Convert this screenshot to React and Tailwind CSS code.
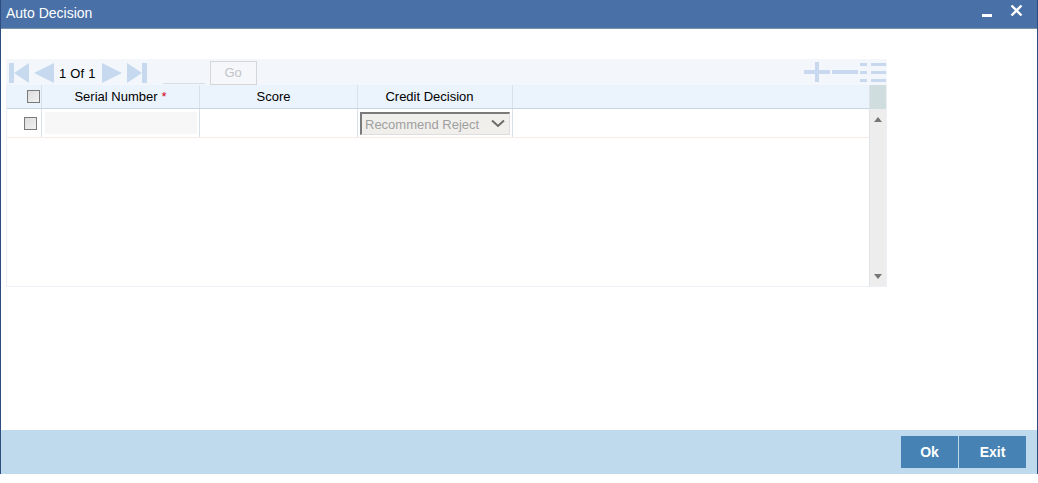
import React from "react";

const F = { fontFamily: '"Liberation Sans", Arial, sans-serif' };

function Tri({ dir, bar }) {
  return (
    <svg width="20" height="20" viewBox="0 0 20 20">
      {dir === "left" ? (
        <>
          {bar && <rect x="0" y="0" width="5" height="20" fill="#c6d9ef" />}
          <polygon points={bar ? "20,0 20,20 5,10" : "20,0 20,20 0,10"} fill="#c6d9ef" />
        </>
      ) : (
        <>
          <polygon points={bar ? "0,0 0,20 15,10" : "0,0 0,20 20,10"} fill="#c6d9ef" />
          {bar && <rect x="15" y="0" width="5" height="20" fill="#c6d9ef" />}
        </>
      )}
    </svg>
  );
}

function Box({ className = "" }) {
  return (
    <div
      className={"w-[13px] h-[13px] border border-[#7a7a7a] bg-gradient-to-br from-[#dcdcdc] to-[#f2f2f2] " + className}
    />
  );
}

export default function App() {
  return (
    <div style={F} className="w-[1038px] h-[483px] bg-white relative overflow-hidden">
      <div className="h-[474px] border-l border-r border-[#2c4d80] flex flex-col">
        {/* title */}
        <div className="h-[29px] bg-[#4a71a7] border-b border-[#7d93a8] flex items-center justify-between pl-[5px] pr-[14px] shrink-0">
          <span className="text-white text-[14px] leading-none -mt-[3px]">Auto Decision</span>
          <div className="flex items-center gap-[18px] -mt-[8px]">
            <div className="w-[10px] h-[3px] bg-white mt-[10px]" />
            <svg width="13" height="13" viewBox="0 0 13 13">
              <path d="M1.5 1.5 L11.5 11.5 M11.5 1.5 L1.5 11.5" stroke="white" strokeWidth="2.4" />
            </svg>
          </div>
        </div>

        {/* body */}
        <div className="flex-1 pt-[30px] pl-[5px]">
          <div className="w-[881px]">
            {/* toolbar */}
            <div className="h-[26px] bg-[#f3f7fc] flex items-center pl-[3px] pt-[2px]">
              <div className="flex items-center">
                <Tri dir="left" bar />
                <div className="w-[5px]" />
                <Tri dir="left" />
                <span className="text-[13px] text-black ml-[5px] mr-[6px] tracking-[0.2px] mt-[1px]">1 Of 1</span>
                <Tri dir="right" />
                <div className="w-[5px]" />
                <Tri dir="right" bar />
              </div>
              <div className="ml-[16px] w-[42px] h-[22px] border-b border-[#d8dde3]" />
              <div className="ml-[5px] w-[47px] h-[24px] border border-[#d4d6d8] bg-[#f5f7fa] flex items-center justify-center text-[13px] text-[#c2c4c6]">
                Go
              </div>
              <div className="flex-1" />
              <div className="flex items-center gap-[2px] pr-[1px] -mt-[3px]">
                <svg width="26" height="20" viewBox="0 0 26 20">
                  <rect x="0" y="8" width="26" height="4" fill="#c8d9ef" />
                  <rect x="11" y="0" width="4" height="20" fill="#c8d9ef" />
                </svg>
                <svg width="26" height="20" viewBox="0 0 26 20">
                  <rect x="0" y="8" width="26" height="4" fill="#c8d9ef" />
                </svg>
                <svg width="26" height="20" viewBox="0 0 26 20">
                  <rect x="0" y="1" width="7" height="3" fill="#c8d9ef" />
                  <rect x="11" y="1" width="15" height="3" fill="#c8d9ef" />
                  <rect x="0" y="9" width="7" height="3" fill="#c8d9ef" />
                  <rect x="11" y="9" width="15" height="3" fill="#c8d9ef" />
                  <rect x="0" y="17" width="7" height="3" fill="#c8d9ef" />
                  <rect x="11" y="17" width="15" height="3" fill="#c8d9ef" />
                </svg>
              </div>
            </div>

            {/* grid */}
            <div className="flex border border-t-0 border-[#eceff4] h-[202px]">
              <div className="w-[865px] border-r border-[#dfe3e8]">
                {/* header */}
                <div className="h-[24px] bg-[#ebf3fd] border-b border-[#c9d4e0] flex text-[13px] text-black">
                  <div className="w-[35px] flex items-center justify-end pr-[1px] border-r border-[#d8e0ea]">
                    <Box />
                  </div>
                  <div className="w-[158px] flex items-center justify-center border-r border-[#d8e0ea] pt-[1px]">
                    Serial Number<span className="text-[#d0021b] ml-[4px]">*</span>
                  </div>
                  <div className="w-[158px] flex items-center justify-center border-r border-[#d8e0ea] pr-[10px] pt-[1px]">Score</div>
                  <div className="w-[155px] flex items-center justify-center border-r border-[#d8e0ea] pr-[11px] pt-[1px]">Credit Decision</div>
                  <div className="flex-1" />
                </div>
                {/* row */}
                <div className="h-[29px] border-b border-[#f6ebe7] flex bg-white">
                  <div className="w-[35px] flex items-center pl-[17px] border-r border-[#d8e0ea] pt-[1px]">
                    <Box />
                  </div>
                  <div className="w-[158px] flex items-center pl-[3px] border-r border-[#d8e0ea]">
                    <div className="w-[152px] h-[22px] bg-[#f7f7f7]" />
                  </div>
                  <div className="w-[158px] border-r border-[#d8e0ea]" />
                  <div className="w-[155px] flex items-center pl-[2px] border-r border-[#d8e0ea]">
                    <div className="w-[150px] h-[23px] bg-[#f0efec] border-t-2 border-l-2 border-[#7a7a7a] border-r border-b border-r-[#dedede] border-b-[#dedede] flex items-center justify-between pl-[3px] pr-[4px]">
                      <span className="text-[13px] text-[#a0a0a0] leading-none mt-[1px]">Recommend Reject</span>
                      <svg width="14" height="9" viewBox="0 0 14 9">
                        <path d="M1 1.5 L7 7 L13 1.5" stroke="#6b6b6b" strokeWidth="2" fill="none" />
                      </svg>
                    </div>
                  </div>
                  <div className="flex-1" />
                </div>
              </div>
              {/* scrollbar */}
              <div className="w-[16px] flex flex-col">
                <div className="h-[24px] bg-[#cfdddf]" />
                <div className="flex-1 bg-[#ededed] flex flex-col items-center justify-between pt-[8px] pb-[7px]">
                  <svg width="8" height="5" viewBox="0 0 8 5">
                    <polygon points="4,0 8,5 0,5" fill="#777" />
                  </svg>
                  <svg width="8" height="5" viewBox="0 0 8 5">
                    <polygon points="0,0 8,0 4,5" fill="#777" />
                  </svg>
                </div>
              </div>
            </div>
          </div>
        </div>

        {/* footer */}
        <div className="h-[44px] bg-[#bedaec] flex items-center justify-end pr-[11px] shrink-0">
          <div className="flex h-[32px] gap-[1px]">
            <div className="w-[57px] bg-[#4682b4] text-white font-bold text-[14px] flex items-center justify-center">Ok</div>
            <div className="w-[67px] bg-[#4682b4] text-white font-bold text-[14px] flex items-center justify-center">Exit</div>
          </div>
        </div>
      </div>
    </div>
  );
}
